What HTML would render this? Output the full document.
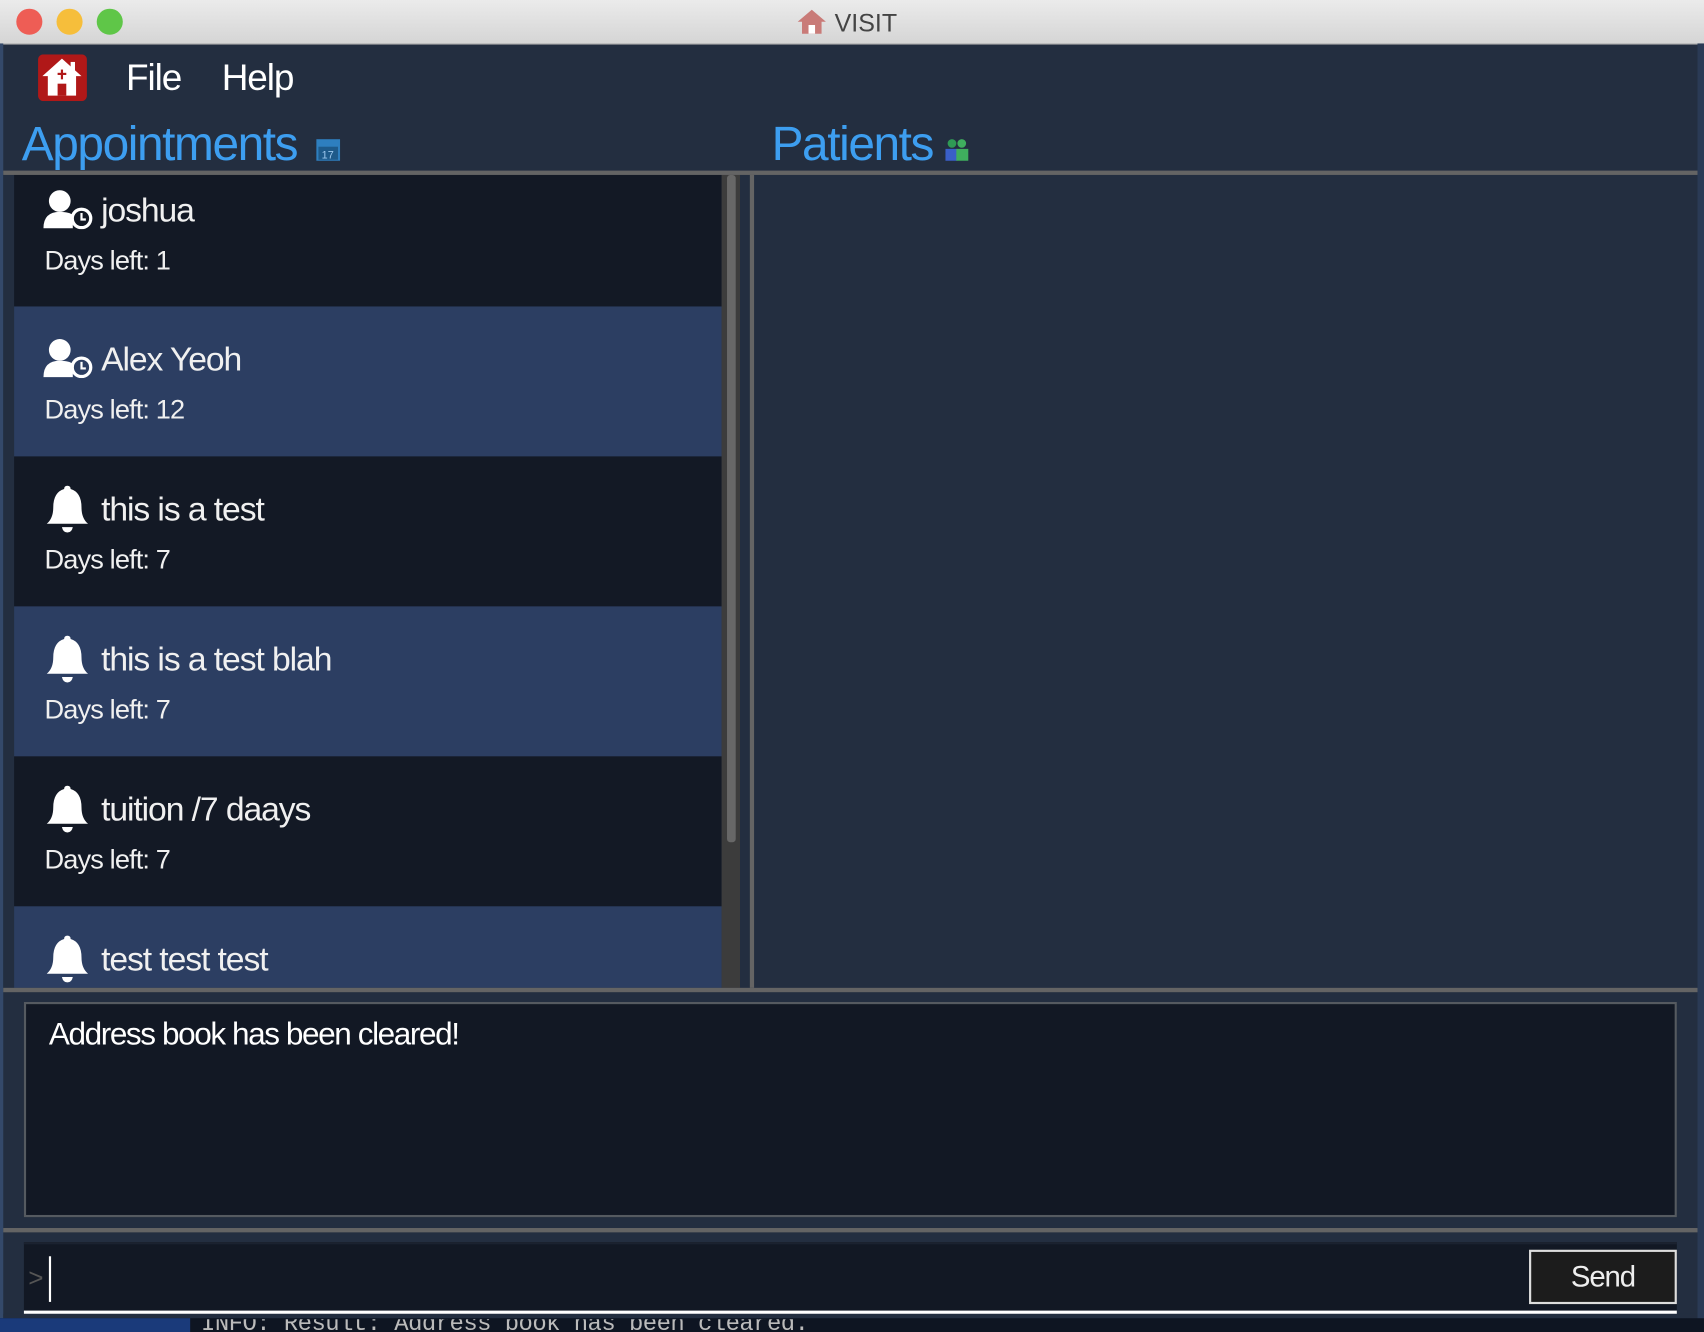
<!DOCTYPE html>
<html><head><meta charset="utf-8"><style>
html,body{margin:0;padding:0;width:1704px;height:1332px;overflow:hidden;background:#101520}
#w{position:absolute;left:0;top:0;width:1568px;height:1226px;transform:scale(1.086735);transform-origin:0 0;font-family:"Liberation Sans",sans-serif;background:#232e40;overflow:hidden}
.a{position:absolute}
.t{color:#fff;white-space:nowrap}
.cell{position:absolute;left:13px;width:651px;height:138px}
.d{background:#131925}.b{background:#2c3e62}
.name{position:absolute;left:80px;top:15px;font-size:31px;color:#f0f0f0;letter-spacing:-1px}
.days{position:absolute;left:28px;top:65px;font-size:25px;color:#f0f0f0;letter-spacing:-0.8px}
.ic{position:absolute;left:27px;top:14px}
</style></head><body><div id="w">
<div class="a" style="left:0;top:0;width:1568px;height:40px;background:linear-gradient(#ebebeb,#d5d5d5);border-bottom:1px solid #b0b0b0"></div>
<div class="a" style="left:15px;top:8px;width:24px;height:24px;border-radius:50%;background:#ee5d55"></div>
<div class="a" style="left:52px;top:8px;width:24px;height:24px;border-radius:50%;background:#f6be3b"></div>
<div class="a" style="left:89px;top:8px;width:24px;height:24px;border-radius:50%;background:#5fc648"></div>
<svg class="a" style="left:733px;top:8px" width="28" height="24" viewBox="0 0 28 24"><path d="M14 1 L27 12 L23 12 L23 23 L5 23 L5 12 L1 12 Z" fill="#c97b78"/><rect x="11" y="15" width="6" height="8" fill="#fff"/></svg>
<div class="a" style="left:768px;top:8px;font-size:23px;color:#444">VISIT</div>
<div class="a" style="left:0;top:40px;width:3px;height:1186px;background:#34496a"></div>
<svg class="a" style="left:35px;top:50px" width="45" height="43" viewBox="0 0 45 43"><rect width="45" height="43" rx="5" fill="#b01818"/><path d="M22 4 L40 20 L35 20 L35 38 L9 38 L9 20 L4 20 Z" fill="#fff"/><rect x="30" y="7" width="4" height="10" fill="#fff"/><rect x="18" y="27" width="8" height="11" fill="#b01818"/><rect x="21" y="14" width="2" height="9" fill="#b01818"/><rect x="18" y="17" width="8" height="2" fill="#b01818"/></svg>
<div class="a t" style="left:116px;top:53px;font-size:34px;letter-spacing:-1px">File</div>
<div class="a t" style="left:204px;top:53px;font-size:34px;letter-spacing:-1px">Help</div>
<div class="a" style="left:20px;top:108px;font-size:44px;color:#3d9ef0;letter-spacing:-1.3px">Appointments</div>
<svg class="a" style="left:291px;top:128px" width="22" height="20"><rect width="22" height="20" fill="#2e7fbf"/><rect x="2" y="7" width="18" height="12" fill="#1e5a8a"/><text x="5" y="18" font-size="10" fill="#9cc8ee" font-family="Liberation Sans">17</text></svg>
<div class="a" style="left:710px;top:108px;font-size:44px;color:#3d9ef0;letter-spacing:-1.3px">Patients</div>
<svg class="a" style="left:869px;top:126px" width="23" height="22"><circle cx="7" cy="6" r="4" fill="#2f9a55"/><circle cx="16" cy="6" r="4" fill="#3fae5e"/><rect x="1" y="11" width="11" height="11" fill="#3a5fc8"/><rect x="11" y="11" width="11" height="11" fill="#3fae5e"/></svg>
<div class="a" style="left:3px;top:157px;width:1565px;height:4px;background:#646464"></div>
<div class="a" style="left:3px;top:161px;width:10px;height:748px;background:#232e40"></div>
<div class="cell d" style="top:161px;height:121px"><svg class="ic" style="top:14px" width="46" height="36" viewBox="0 0 46 36"><circle cx="15" cy="10" r="10" fill="#fff"/><path d="M0 35 Q0 20 15 20 Q24 20 27 23 L27 35 Z" fill="#fff"/><circle cx="35" cy="26" r="10" fill="#fff"/><circle cx="35" cy="26" r="7" fill="#131925"/><path d="M35 21 L35 27 L39 27" stroke="#fff" stroke-width="2" fill="none"/></svg><div class="name">joshua</div><div class="days">Days left: 1</div></div>
<div class="cell b" style="top:282px"><svg class="ic" style="top:30px" width="46" height="36" viewBox="0 0 46 36"><circle cx="15" cy="10" r="10" fill="#fff"/><path d="M0 35 Q0 20 15 20 Q24 20 27 23 L27 35 Z" fill="#fff"/><circle cx="35" cy="26" r="10" fill="#fff"/><circle cx="35" cy="26" r="7" fill="#2c3e62"/><path d="M35 21 L35 27 L39 27" stroke="#fff" stroke-width="2" fill="none"/></svg><div class="name" style="top:31px">Alex Yeoh</div><div class="days" style="top:81px">Days left: 12</div></div>
<svg width="0" height="0" style="position:absolute"><defs><g id="bell"><path d="M20 2 Q23 2 23 5 Q33 8 33 22 Q33 32 39 37 L1 37 Q7 32 7 22 Q7 8 17 5 Q17 2 20 2 Z" fill="#fff"/><path d="M15 40 L25 40 Q24 45 20 45 Q16 45 15 40 Z" fill="#fff"/></g></defs></svg>
<div class="cell d" style="top:420px"><svg class="ic" style="top:25px;left:29px" width="40" height="46"><use href="#bell"/></svg><div class="name" style="top:31px">this is a test</div><div class="days" style="top:81px">Days left: 7</div></div>
<div class="cell b" style="top:558px"><svg class="ic" style="top:25px;left:29px" width="40" height="46"><use href="#bell"/></svg><div class="name" style="top:31px">this is a test blah</div><div class="days" style="top:81px">Days left: 7</div></div>
<div class="cell d" style="top:696px"><svg class="ic" style="top:25px;left:29px" width="40" height="46"><use href="#bell"/></svg><div class="name" style="top:31px">tuition /7 daays</div><div class="days" style="top:81px">Days left: 7</div></div>
<div class="cell b" style="top:834px;height:75px"><svg class="ic" style="top:25px;left:29px" width="40" height="46"><use href="#bell"/></svg><div class="name" style="top:31px">test test test</div></div>
<div class="a" style="left:664px;top:161px;width:17px;height:748px;background:#3c3c3c"></div>
<div class="a" style="left:669px;top:161px;width:8px;height:614px;background:#676767;border-radius:3px"></div>
<div class="a" style="left:681px;top:161px;width:9px;height:748px;background:#232e40"></div>
<div class="a" style="left:690px;top:161px;width:4px;height:748px;background:#646464"></div>
<div class="a" style="left:694px;top:161px;width:868px;height:748px;background:#232e40"></div>
<div class="a" style="left:1562px;top:40px;width:6px;height:1186px;background:#2a3a55"></div>
<div class="a" style="left:3px;top:909px;width:1559px;height:4px;background:#646464"></div>
<div class="a" style="left:22px;top:922px;width:1517px;height:194px;background:#121824;border:2px solid #555a60"></div>
<div class="a t" style="left:45px;top:936px;font-size:29px;letter-spacing:-1.3px">Address book has been cleared!</div>
<div class="a" style="left:3px;top:1130px;width:1559px;height:4px;background:#646464"></div>
<div class="a" style="left:22px;top:1143px;width:1521px;height:64px;background:#121824;border-top:2px solid #1b2230"></div>
<div class="a" style="left:22px;top:1206px;width:1521px;height:3px;background:#fff"></div>
<div class="a" style="left:26px;top:1163px;font-size:24px;color:#555">&gt;</div>
<div class="a" style="left:45px;top:1156px;width:2px;height:42px;background:#fff"></div>
<div class="a" style="left:1407px;top:1150px;width:132px;height:46px;background:#1c1c1c;border:2px solid #ddd"></div>
<div class="a" style="left:1407px;top:1160px;width:136px;text-align:center;font-size:27px;color:#eee;letter-spacing:-1px">Send</div>
<div class="a" style="left:3px;top:1209px;width:1559px;height:4px;background:#232e40"></div>
<div class="a" style="left:0;top:1213px;width:1568px;height:13px;background:#0e1522"></div>
<div class="a" style="left:0;top:1213px;width:175px;height:13px;background:#1a3a7a"></div>
<div class="a" style="left:185px;top:1206px;font-family:'Liberation Mono',monospace;font-size:22px;color:#bbb;letter-spacing:-0.5px;clip-path:inset(8px 0 0 0)">INFO: Result: Address book has been cleared.</div>
</div></body></html>
